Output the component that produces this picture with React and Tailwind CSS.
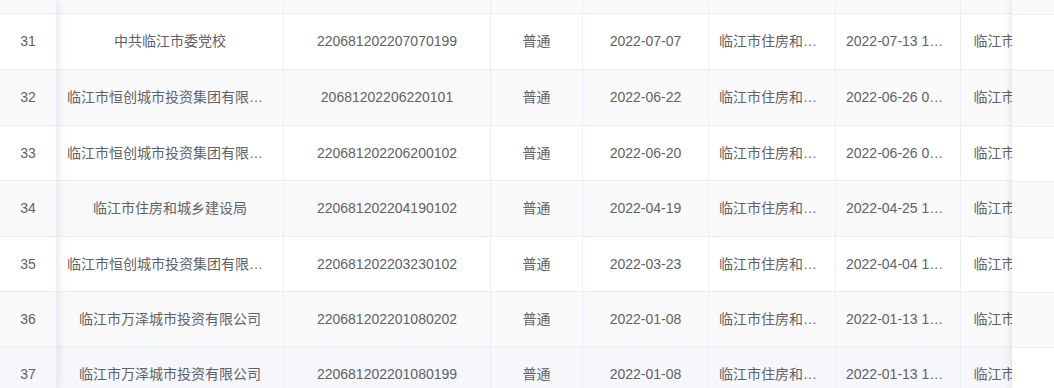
import React from "react";

const rows = [
  { n: "", h: "h-[56px]", bg: "bg-[#fafafa]", org: "", code: "", type: "", date: "", dept: "", time: "", dept2: "" },
  { n: "31", h: "h-[56px]", bg: "bg-white", org: "中共临江市委党校", code: "220681202207070199", type: "普通", date: "2022-07-07", dept: "临江市住房和城乡建设局", time: "2022-07-13 15:20:11", dept2: "临江市住房和城乡建设局" },
  { n: "32", h: "h-[56px]", bg: "bg-[#fafafa]", org: "临江市恒创城市投资集团有限公司", code: "20681202206220101", type: "普通", date: "2022-06-22", dept: "临江市住房和城乡建设局", time: "2022-06-26 09:31:02", dept2: "临江市住房和城乡建设局" },
  { n: "33", h: "h-[55px]", bg: "bg-white", org: "临江市恒创城市投资集团有限公司", code: "220681202206200102", type: "普通", date: "2022-06-20", dept: "临江市住房和城乡建设局", time: "2022-06-26 09:28:44", dept2: "临江市住房和城乡建设局" },
  { n: "34", h: "h-[56px]", bg: "bg-[#fafafa]", org: "临江市住房和城乡建设局", code: "220681202204190102", type: "普通", date: "2022-04-19", dept: "临江市住房和城乡建设局", time: "2022-04-25 14:05:37", dept2: "临江市住房和城乡建设局" },
  { n: "35", h: "h-[55px]", bg: "bg-white", org: "临江市恒创城市投资集团有限公司", code: "220681202203230102", type: "普通", date: "2022-03-23", dept: "临江市住房和城乡建设局", time: "2022-04-04 16:40:19", dept2: "临江市住房和城乡建设局" },
  { n: "36", h: "h-[55px]", bg: "bg-[#fafafa]", org: "临江市万泽城市投资有限公司", code: "220681202201080202", type: "普通", date: "2022-01-08", dept: "临江市住房和城乡建设局", time: "2022-01-13 10:52:08", dept2: "临江市住房和城乡建设局" },
  { n: "37", h: "h-[56px]", bg: "bg-[#f5f7fa]", org: "临江市万泽城市投资有限公司", code: "220681202201080199", type: "普通", date: "2022-01-08", dept: "临江市住房和城乡建设局", time: "2022-01-13 10:49:55", dept2: "临江市住房和城乡建设局" },
];

const cell = "flex items-center justify-center shrink-0 border-r border-[#ebeef5] px-[10px] overflow-hidden";
const txt = "block w-full overflow-hidden text-ellipsis whitespace-nowrap text-center";

export default function App() {
  return (
    <div
      className="w-[1054px] h-[388px] overflow-hidden bg-white text-[14px] text-[#606266] flex"
      style={{ fontFamily: '"Liberation Sans", "Noto Sans CJK SC", sans-serif' }}
    >
      {/* left fixed column */}
      <div className="relative z-10 w-[57px] shrink-0 shadow-[0_0_10px_rgba(0,0,0,0.12)] bg-white">
        <div className="mt-[-42px] flex flex-col">
          {rows.map((r, i) => (
            <div key={i} className={`${r.h} ${r.bg} border-b border-r border-[#ebeef5] flex items-center justify-center`}>
              {r.n}
            </div>
          ))}
        </div>
      </div>

      {/* scrolling body */}
      <div className="w-[955px] shrink-0 overflow-hidden">
        <div className="mt-[-42px] flex flex-col w-[1200px]">
          {rows.map((r, i) => (
            <div key={i} className={`${r.h} ${r.bg} border-b border-[#ebeef5] flex`}>
              <div className={`${cell} w-[227px]`}><span className={txt}>{r.org}</span></div>
              <div className={`${cell} w-[207px]`}><span className={txt}>{r.code}</span></div>
              <div className={`${cell} w-[92px]`}><span className={txt}>{r.type}</span></div>
              <div className={`${cell} w-[126px]`}><span className={txt}>{r.date}</span></div>
              <div className={`${cell} w-[127px]`}><span className={txt}>{r.dept}</span></div>
              <div className={`${cell} w-[125px]`}><span className={txt}>{r.time}</span></div>
              <div className={`${cell} w-[180px]`}><span className={txt}>{r.dept2}</span></div>
            </div>
          ))}
        </div>
      </div>

      {/* right fixed column */}
      <div className="relative z-10 w-[42px] shrink-0 shadow-[0_0_10px_rgba(0,0,0,0.12)] bg-white">
        <div className="mt-[-41px] flex flex-col">
          {rows.map((r, i) => (
            <div key={i} className={`${r.h} ${r.bg === "bg-[#f5f7fa]" ? "bg-white" : r.bg} border-b border-[#ebeef5]`} />
          ))}
        </div>
      </div>
    </div>
  );
}
